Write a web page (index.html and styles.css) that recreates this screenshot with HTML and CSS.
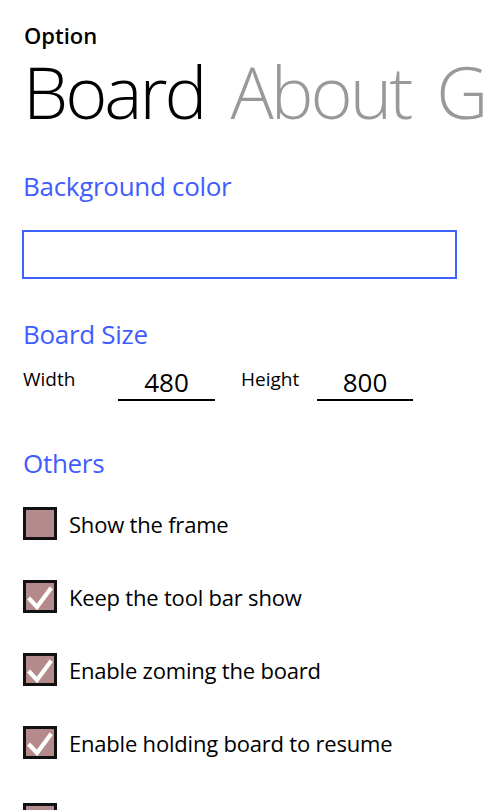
FILE: index.html
```html
<!DOCTYPE html>
<html>
<head>
<meta charset="utf-8">
<link rel="stylesheet" href="styles.css">
</head>
<body>
<div class="page">
  <div class="app-title">Option</div>
  <div class="pivot"><span class="pivot-item active">Board</span><span class="pivot-item">About</span><span class="pivot-item">Game</span></div>

  <div class="section-title first">Background color</div>
  <div class="color-box"></div>

  <div class="section-title">Board Size</div>
  <div class="size-row">
    <span class="size-label w-label">Width</span>
    <span class="size-field f-width">480</span>
    <span class="size-label h-label">Height</span>
    <span class="size-field f-height">800</span>
  </div>

  <div class="section-title others">Others</div>
  <div class="checks">
    <div class="check-row">
      <span class="box"></span>
      <span class="check-label">Show the frame</span>
    </div>
    <div class="check-row">
      <span class="box"><svg viewBox="0 0 33 33" width="33" height="33"><path d="M7 19.5 L14 27 L27 9.5" fill="none" stroke="#fff" stroke-width="4.2" stroke-linecap="square"/></svg></span>
      <span class="check-label">Keep the tool bar show</span>
    </div>
    <div class="check-row">
      <span class="box"><svg viewBox="0 0 33 33" width="33" height="33"><path d="M7 19.5 L14 27 L27 9.5" fill="none" stroke="#fff" stroke-width="4.2" stroke-linecap="square"/></svg></span>
      <span class="check-label">Enable zoming the board</span>
    </div>
    <div class="check-row">
      <span class="box"><svg viewBox="0 0 33 33" width="33" height="33"><path d="M7 19.5 L14 27 L27 9.5" fill="none" stroke="#fff" stroke-width="4.2" stroke-linecap="square"/></svg></span>
      <span class="check-label">Enable holding board to resume</span>
    </div>
    <div class="check-row last">
      <span class="box"></span>
      <span class="check-label">Show the score</span>
    </div>
  </div>
</div>
</body>
</html>
```

FILE: styles.css
```css
html, body {
  margin: 0;
  padding: 0;
  background: #ffffff;
  overflow: hidden;
}
body {
  width: 486px;
  height: 810px;
  font-family: "Open Sans", "Noto Sans", sans-serif;
  color: #000;
}
.page {
  padding: 20px 0 0 23px;
}
.app-title {
  font-size: 22px;
  line-height: 30px;
  font-weight: 600;
  padding-left: 1px;
}
.pivot {
  margin-top: 1px;
  font-size: 72px;
  line-height: 80px;
  font-weight: 300;
  white-space: nowrap;
  overflow: hidden;
  letter-spacing: -3px;
}
.pivot-item {
  color: #999999;
  margin-right: 26px;
}
.pivot-item.active {
  color: #000;
}
.section-title {
  color: #3f5cff;
  font-size: 26px;
  line-height: 36px;
  margin-top: 37px;
  letter-spacing: -0.3px;
}
.color-box {
  margin-top: 26px;
  margin-left: -1px;
  width: 431px;
  height: 45px;
  border: 2px solid #4060ff;
}
.size-row {
  display: flex;
  align-items: flex-start;
  margin-top: 12px;
}
.size-label {
  font-size: 19px;
  line-height: 30px;
}
.w-label { width: 95px; }
.h-label { width: 76px; }
.size-field {
  margin-top: 1px;
  height: 34px;
  font-size: 26px;
  line-height: 34px;
  text-align: center;
  border-bottom: 2px solid #000;
}
.f-width { width: 97px; margin-right: 26px; }
.f-height { width: 96px; }
.others {
  margin-top: 44px;
}
.checks {
  margin-top: 6px;
}
.check-row {
  display: flex;
  align-items: center;
  height: 73px;
}
.check-row.last {
  margin-top: 4px;
}
.box {
  box-sizing: border-box;
  width: 34px;
  height: 33px;
  border: 3px solid #111;
  background: #b48a8a;
  position: relative;
  flex: none;
}
.box svg {
  position: absolute;
  left: -3px;
  top: -3px;
}
.check-label {
  margin-left: 12px;
  font-size: 22px;
  line-height: 30px;
  letter-spacing: -0.2px;
}
```
